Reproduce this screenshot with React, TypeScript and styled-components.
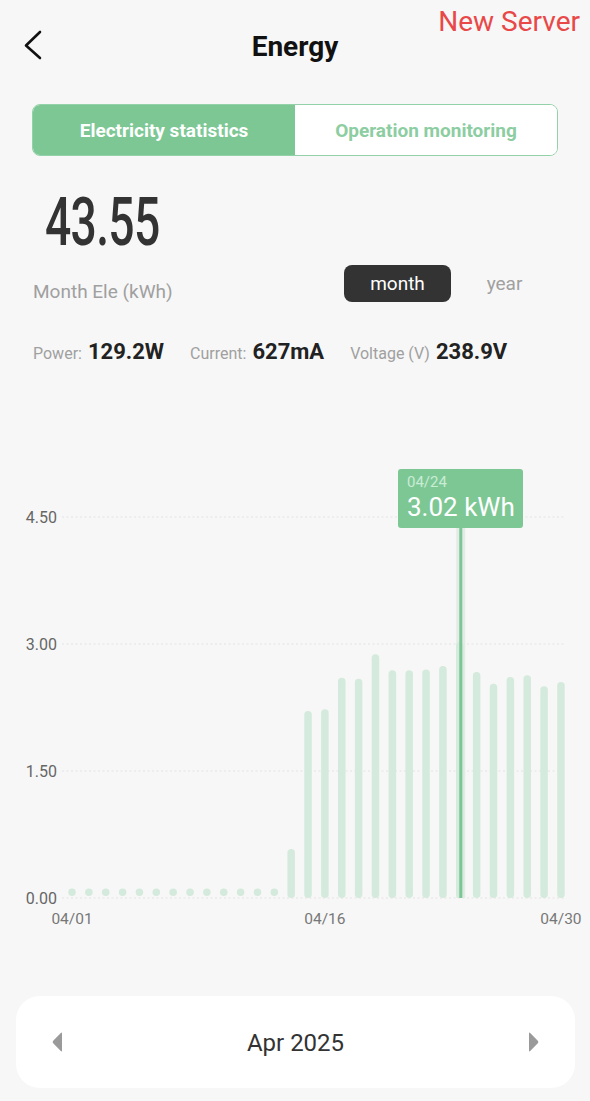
import React from 'react';
import styled, { createGlobalStyle } from 'styled-components';

const GREEN = '#7dc795';

const GlobalStyle = createGlobalStyle`
    html, body {
        margin: 0;
        padding: 0;
        background: #f7f7f7;
    }
    body {
        font-family: Roboto, "Noto Sans", "Liberation Sans", sans-serif;
        color: #222;
    }
`;

const Page = styled.div`
    width: 590px;
    height: 1101px;
    position: relative;
    overflow: hidden;
    background: #f7f7f7;
`;

const Header = styled.div`
    height: 92px;
    display: flex;
    align-items: center;
    justify-content: center;
    position: relative;
`;

const BackButton = styled.div`
    position: absolute;
    left: 20px;
    top: 26px;
    width: 28px;
    height: 38px;
`;

const Title = styled.h1`
    margin: 0;
    font-size: 28px;
    font-weight: 700;
    color: #111;
`;

const ServerTag = styled.div`
    position: absolute;
    right: 10px;
    top: 5px;
    font-size: 28px;
    color: #e94848;
`;

const Tabs = styled.div`
    margin: 12px 32px 0;
    height: 52px;
    display: flex;
    border: 1.5px solid #93d2a8;
    border-radius: 8px;
    overflow: hidden;
    box-sizing: border-box;
    background: #fff;
`;

const Tab = styled.div<{ active?: boolean }>`
    flex: 1;
    display: flex;
    align-items: center;
    justify-content: center;
    font-size: 19px;
    font-weight: 700;
    background: ${(p) => (p.active ? GREEN : '#fff')};
    color: ${(p) => (p.active ? '#fff' : '#8ccda1')};
`;

const BigValue = styled.div`
    margin: 33px 0 0 45px;
    height: 66px;
    font-size: 67px;
    line-height: 66px;
    font-weight: 500;
    color: #333;
    transform: scaleX(0.69);
    transform-origin: left center;
    letter-spacing: -1px;
`;

const SummaryRow = styled.div`
    margin-top: 10px;
    display: flex;
    align-items: flex-end;
    padding: 0 32px 0 33px;
`;

const SummaryLabel = styled.div`
    flex: 1;
    font-size: 19px;
    line-height: 20px;
    color: #a0a0a0;
`;

const RangeToggle = styled.div`
    display: flex;
`;

const RangeOption = styled.div<{ active?: boolean }>`
    width: 107px;
    height: 37px;
    display: flex;
    align-items: center;
    justify-content: center;
    border-radius: 8px;
    font-size: 19px;
    background: ${(p) => (p.active ? '#333' : 'transparent')};
    color: ${(p) => (p.active ? '#fff' : '#a0a0a0')};
`;

const StatsRow = styled.div`
    margin-top: 37px;
    padding-left: 33px;
    display: flex;
    gap: 26px;
    align-items: baseline;
    height: 24px;
`;

const Stat = styled.div`
    display: flex;
    align-items: baseline;
    gap: 6px;
`;

const StatLabel = styled.span`
    font-size: 16px;
    color: #a0a0a0;
`;

const StatValue = styled.span`
    font-size: 22px;
    font-weight: 700;
    color: #222;
`;

const ChartWrap = styled.div`
    margin-top: 77px;
    position: relative;
    height: 490px;
`;

const Tooltip = styled.div`
    position: absolute;
    left: 398px;
    top: 29px;
    width: 125px;
    height: 59px;
    box-sizing: border-box;
    padding: 4px 0 0 9px;
    background: ${GREEN};
    border-radius: 3px;
    display: flex;
    flex-direction: column;
`;

const TooltipDate = styled.span`
    font-size: 15px;
    line-height: 18px;
    color: #c9ecd5;
`;

const TooltipValue = styled.span`
    font-size: 26px;
    line-height: 32px;
    color: #fff;
`;

const MonthCard = styled.div`
    margin: 66px 15px 0 16px;
    height: 92px;
    background: #fff;
    border-radius: 24px;
    display: flex;
    align-items: center;
    justify-content: space-between;
    padding: 0 36px;
`;

const MonthText = styled.div`
    font-size: 24px;
    color: #333;
    padding-top: 2px;
`;

const values: number[] = [
    0, 0, 0, 0, 0, 0, 0, 0, 0, 0, 0, 0, 0,
    0.58, 2.21, 2.23, 2.6, 2.59, 2.88, 2.69, 2.69, 2.7, 2.74, 3.02, 2.67, 2.53, 2.61, 2.63, 2.5, 2.55,
];

const BASE = 898;
const PER_KWH = 84.67;
const X0 = 72;
const STEP = 16.86;
const BAR_W = 7.5;
const SELECTED = 23;

const Chart: React.FC = () => {
    const grid = [
        { label: '4.50', y: 517 },
        { label: '3.00', y: 644 },
        { label: '1.50', y: 771 },
        { label: '0.00', y: 898 },
    ];
    const ticks = [
        { label: '04/01', i: 0 },
        { label: '04/16', i: 15 },
        { label: '04/30', i: 29 },
    ];
    const cx = X0 + SELECTED * STEP + 1;
    return (
        <svg width={590} height={490} viewBox="0 440 590 490" style={{ display: 'block' }}>
            {grid.map((g) => (
                <g key={g.label}>
                    <line x1={62} x2={566} y1={g.y} y2={g.y} stroke="#e3e3e3" strokeWidth={1} strokeDasharray="2 2.5" />
                    <text x={57} y={g.y + 5.5} textAnchor="end" fontSize={16} fill="#666" fontFamily="Roboto">
                        {g.label}
                    </text>
                </g>
            ))}
            <rect x={cx - 4.5} y={528} width={9} height={BASE - 528} fill="#e3ebe6" />
            {values.map((v, i) => {
                const h = Math.max(v * PER_KWH, BAR_W);
                const x = X0 + i * STEP - BAR_W / 2;
                return (
                    <rect
                        key={i}
                        x={x}
                        y={BASE - h + (v === 0 ? -2 : 0)}
                        width={BAR_W}
                        height={h}
                        rx={BAR_W / 2}
                        fill="#d4eadc"
                    />
                );
            })}
            <rect x={cx - 1.5} y={528} width={3} height={BASE - 528} fill="#7cc594" />
            {ticks.map((t) => (
                <text
                    key={t.label}
                    x={X0 + t.i * STEP}
                    y={924}
                    textAnchor="middle"
                    fontSize={15.5}
                    fill="#777"
                    fontFamily="Roboto"
                >
                    {t.label}
                </text>
            ))}
        </svg>
    );
};

const Arrow: React.FC<{ dir: 'left' | 'right' }> = ({ dir }) => (
    <svg width={12} height={20} viewBox="0 0 12 20">
        {dir === 'left' ? (
            <path d="M10 1.5 L10 18.5 Q10 20 8.8 19 L1.2 11.2 Q0 10 1.2 8.8 L8.8 1 Q10 0 10 1.5 Z" fill="#9a9a9a" />
        ) : (
            <path d="M2 1.5 L2 18.5 Q2 20 3.2 19 L10.8 11.2 Q12 10 10.8 8.8 L3.2 1 Q2 0 2 1.5 Z" fill="#9a9a9a" />
        )}
    </svg>
);

const App: React.FC = () => {
    return (
        <Page>
            <GlobalStyle />
            <Header>
                <BackButton>
                    <svg width={28} height={38} viewBox="0 0 28 38">
                        <polyline points="20,6 6,19.5 20,32" fill="none" stroke="#111" strokeWidth={2.6} strokeLinecap="round" strokeLinejoin="round" />
                    </svg>
                </BackButton>
                <Title>Energy</Title>
                <ServerTag>New Server</ServerTag>
            </Header>

            <Tabs>
                <Tab active>Electricity statistics</Tab>
                <Tab>Operation monitoring</Tab>
            </Tabs>

            <BigValue>43.55</BigValue>

            <SummaryRow>
                <SummaryLabel>Month Ele (kWh)</SummaryLabel>
                <RangeToggle>
                    <RangeOption active>month</RangeOption>
                    <RangeOption>year</RangeOption>
                </RangeToggle>
            </SummaryRow>

            <StatsRow>
                <Stat>
                    <StatLabel>Power:</StatLabel>
                    <StatValue>129.2W</StatValue>
                </Stat>
                <Stat>
                    <StatLabel>Current:</StatLabel>
                    <StatValue>627mA</StatValue>
                </Stat>
                <Stat>
                    <StatLabel>Voltage (V)</StatLabel>
                    <StatValue>238.9V</StatValue>
                </Stat>
            </StatsRow>

            <ChartWrap>
                <Chart />
                <Tooltip>
                    <TooltipDate>04/24</TooltipDate>
                    <TooltipValue>3.02 kWh</TooltipValue>
                </Tooltip>
            </ChartWrap>

            <MonthCard>
                <Arrow dir="left" />
                <MonthText>Apr 2025</MonthText>
                <Arrow dir="right" />
            </MonthCard>
        </Page>
    );
};

export default App;
